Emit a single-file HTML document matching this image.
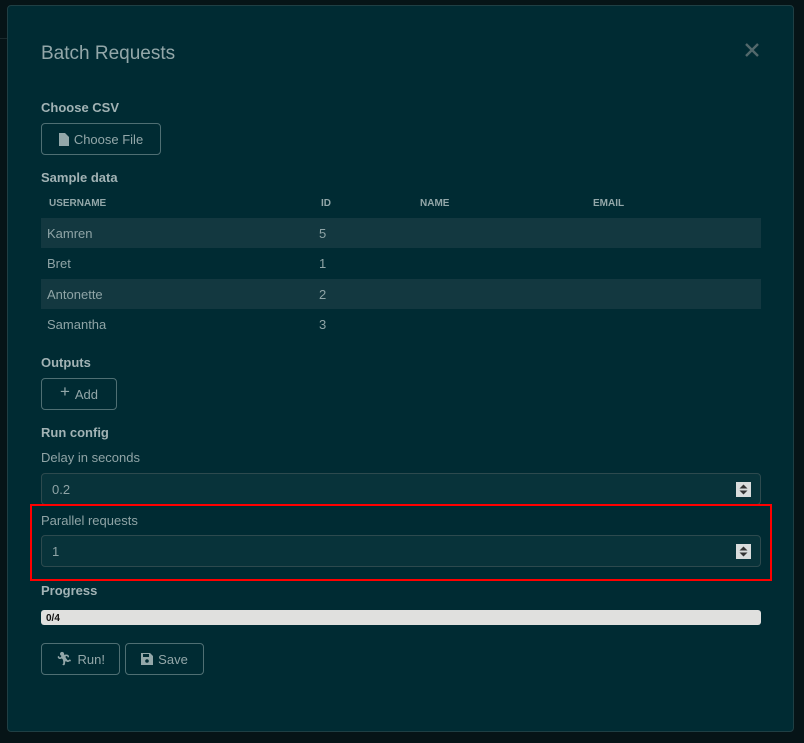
<!DOCTYPE html><html><head><style>
*{box-sizing:border-box;margin:0;padding:0}
body{width:804px;height:743px;background:#061417;font-family:"Liberation Sans",sans-serif;position:relative;overflow:hidden;color:#8fa4a6}
.a{position:absolute}
.modal{left:7px;top:5px;width:787px;height:727px;background:#002b33;border:1px solid #1f3f44;border-radius:4px}
.b{font-weight:bold;font-size:13px;color:#a2b3b5}
.btn{border:1px solid #4f6f73;border-radius:4px;font-size:13px;color:#93a7a9;display:flex;align-items:center;justify-content:center;gap:5px;background:#002b33}
.inp{left:41px;width:720px;height:32px;border:1px solid #2d4a4e;border-radius:4px;background:#08333a;font-size:13px;padding-left:10px;display:flex;align-items:center}
.spin{position:absolute;right:9px;top:8px;width:15px;height:15px;background:#d9dcdc}
.row{left:41px;width:720px;height:30px;font-size:13px;display:flex;align-items:center}
.row span{position:absolute}
</style></head><body>
<div class="a" style="left:0;top:38px;width:7px;height:1px;background:#1b2a2d"></div>
<div class="a modal"></div>
<div class="a" style="left:41px;top:43px;font-size:19px;color:#93a7a9">Batch Requests</div>
<svg class="a" style="left:745px;top:43px" width="14" height="14" viewBox="0 0 14 14"><path d="M1 1L13 13M13 1L1 13" stroke="#52686b" stroke-width="2.4"/></svg>
<div class="a b" style="left:41px;top:100px">Choose CSV</div>
<div class="a btn" style="left:41px;top:123px;width:120px;height:32px"><svg width="10" height="13" viewBox="0 0 10 13"><path d="M0 0h6l4 4v9H0z" fill="#93a7a9"/></svg>Choose File</div>
<div class="a b" style="left:41px;top:170px">Sample data</div>
<div class="a" style="left:49px;top:198px;font-size:10px;font-weight:bold;color:#93a7a9">USERNAME</div>
<div class="a" style="left:321px;top:198px;font-size:10px;font-weight:bold;color:#93a7a9">ID</div>
<div class="a" style="left:420px;top:198px;font-size:10px;font-weight:bold;color:#93a7a9">NAME</div>
<div class="a" style="left:593px;top:198px;font-size:10px;font-weight:bold;color:#93a7a9">EMAIL</div>
<div class="a row" style="top:218px;background:#133840"><span style="left:6px">Kamren</span><span style="left:278px">5</span></div>
<div class="a row" style="top:248px"><span style="left:6px">Bret</span><span style="left:278px">1</span></div>
<div class="a row" style="top:279px;background:#133840"><span style="left:6px">Antonette</span><span style="left:278px">2</span></div>
<div class="a row" style="top:309px"><span style="left:6px">Samantha</span><span style="left:278px">3</span></div>
<div class="a b" style="left:41px;top:355px">Outputs</div>
<div class="a btn" style="left:41px;top:378px;width:76px;height:32px"><span style="font-size:17px;margin-top:-4px">+</span>Add</div>
<div class="a b" style="left:41px;top:425px">Run config</div>
<div class="a" style="left:41px;top:450px;font-size:13px">Delay in seconds</div>
<div class="a inp" style="top:473px">0.2<svg class="spin" viewBox="0 0 15 15"><path d="M3.5 6.5L7.5 2.5L11.5 6.5ZM3.5 8.5L7.5 12.5L11.5 8.5Z" fill="#333"/></svg></div>
<div class="a" style="left:30px;top:504px;width:742px;height:77px;border:2px solid #f00"></div>
<div class="a" style="left:41px;top:513px;font-size:13px">Parallel requests</div>
<div class="a inp" style="top:535px">1<svg class="spin" viewBox="0 0 15 15"><path d="M3.5 6.5L7.5 2.5L11.5 6.5ZM3.5 8.5L7.5 12.5L11.5 8.5Z" fill="#333"/></svg></div>
<div class="a b" style="left:41px;top:583px">Progress</div>
<div class="a" style="left:41px;top:610px;width:720px;height:15px;background:#e0e0de;border-radius:3px;font-size:10px;font-weight:bold;color:#111;padding:3px 0 0 5px">0/4</div>
<div class="a btn" style="left:41px;top:643px;width:79px;height:32px"><span>🏃&#xFE0E;</span>Run!</div>
<div class="a btn" style="left:125px;top:643px;width:79px;height:32px"><svg width="12" height="12" viewBox="0 0 12 12"><path d="M0 0h9l3 3v9H0z" fill="#93a7a9"/><rect x="2" y="1" width="6" height="3" fill="#002b33"/><circle cx="6" cy="8" r="1.8" fill="#002b33"/></svg>Save</div>
</body></html>
